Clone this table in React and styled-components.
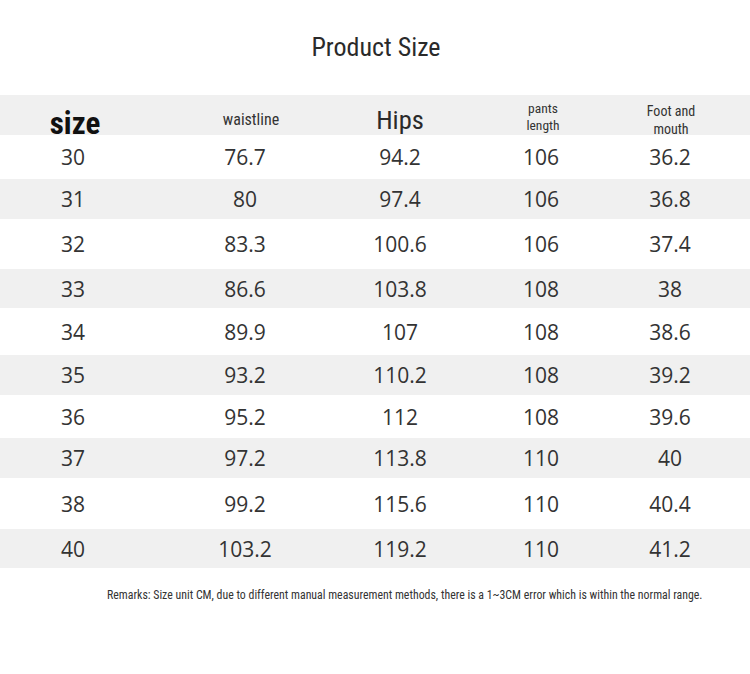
import React from "react";
import styled, { createGlobalStyle } from "styled-components";

const GlobalStyle = createGlobalStyle`
  body {
    margin: 0;
    background: #ffffff;
  }
`;

const narrow = `"Liberation Sans Narrow", "Roboto Condensed", "DejaVu Sans Condensed", "Arial Narrow", sans-serif`;

const rows = [
  { size: "30", waist: "76.7", hips: "94.2", length: "106", foot: "36.2", h: 44 },
  { size: "31", waist: "80", hips: "97.4", length: "106", foot: "36.8", h: 40 },
  { size: "32", waist: "83.3", hips: "100.6", length: "106", foot: "37.4", h: 50 },
  { size: "33", waist: "86.6", hips: "103.8", length: "108", foot: "38", h: 39 },
  { size: "34", waist: "89.9", hips: "107", length: "108", foot: "38.6", h: 47 },
  { size: "35", waist: "93.2", hips: "110.2", length: "108", foot: "39.2", h: 40 },
  { size: "36", waist: "95.2", hips: "112", length: "108", foot: "39.6", h: 43 },
  { size: "37", waist: "97.2", hips: "113.8", length: "110", foot: "40", h: 40 },
  { size: "38", waist: "99.2", hips: "115.6", length: "110", foot: "40.4", h: 51 },
  { size: "40", waist: "103.2", hips: "119.2", length: "110", foot: "41.2", h: 39 },
];

export default function App() {
  return (
    <Page>
      <GlobalStyle />
      <Title>Product Size</Title>
      <Table>
        <HeadRow>
          <HeadCell $size={31} $weight={700} $color="#111" $shift={9} $dx={2}>size</HeadCell>
          <HeadCell $size={16} $shift={5} $dx={6}>waistline</HeadCell>
          <HeadCell $size={26.5} $color="#2a2a2a" $shift={5}>Hips</HeadCell>
          <HeadCell $size={13.5} $shift={2} $dx={2}>pants<br />length</HeadCell>
          <HeadCell $size={14} $shift={5} $dx={1}>Foot and<br />mouth</HeadCell>
        </HeadRow>
        {rows.map((r, i) => (
          <Row key={r.size} $shaded={i % 2 === 1} $h={r.h}>
            <Cell>{r.size}</Cell>
            <Cell>{r.waist}</Cell>
            <Cell>{r.hips}</Cell>
            <Cell>{r.length}</Cell>
            <Cell>{r.foot}</Cell>
          </Row>
        ))}
      </Table>
      <Remarks>
        Remarks: Size unit CM, due to different manual measurement methods, there is a 1~3CM error which is within the normal range.
      </Remarks>
    </Page>
  );
}

const Page = styled.div`
  width: 750px;
  height: 674px;
  background: #ffffff;
  display: flex;
  flex-direction: column;
`;

const Title = styled.h1`
  margin: 0;
  height: 95px;
  display: flex;
  align-items: center;
  justify-content: center;
  font-family: ${narrow};
  font-size: 26px;
  font-weight: 400;
  color: #2a2a2a;
  padding-bottom: 1px;
  padding-left: 2px;
  box-sizing: border-box;
`;

const Table = styled.div`
  display: flex;
  flex-direction: column;
`;

const cols = `146px 198px 112px 170px 88px 1fr`;

const HeadRow = styled.div`
  display: grid;
  grid-template-columns: ${cols};
  height: 40px;
  background: #f0f0f0;
`;

const HeadCell = styled.div`
  display: flex;
  align-items: center;
  justify-content: center;
  text-align: center;
  font-family: ${narrow};
  font-size: ${(p) => p.$size}px;
  font-weight: ${(p) => p.$weight || 400};
  color: ${(p) => p.$color || "#333333"};
  line-height: 1.3;
  transform: translate(${(p) => p.$dx || 0}px, ${(p) => p.$shift || 0}px);
  white-space: nowrap;
`;

const Row = styled.div`
  display: grid;
  grid-template-columns: ${cols};
  height: ${(p) => p.$h}px;
  background: ${(p) => (p.$shaded ? "#f0f0f0" : "#ffffff")};
`;

const Cell = styled.div`
  display: flex;
  align-items: center;
  justify-content: center;
  font-family: "Open Sans", "Noto Sans", sans-serif;
  font-size: 21px;
  font-weight: 400;
  color: #333333;
`;

const Remarks = styled.p`
  margin: 20px 0 0 107px;
  font-family: ${narrow};
  font-size: 11.85px;
  color: #333333;
  white-space: nowrap;
`;
